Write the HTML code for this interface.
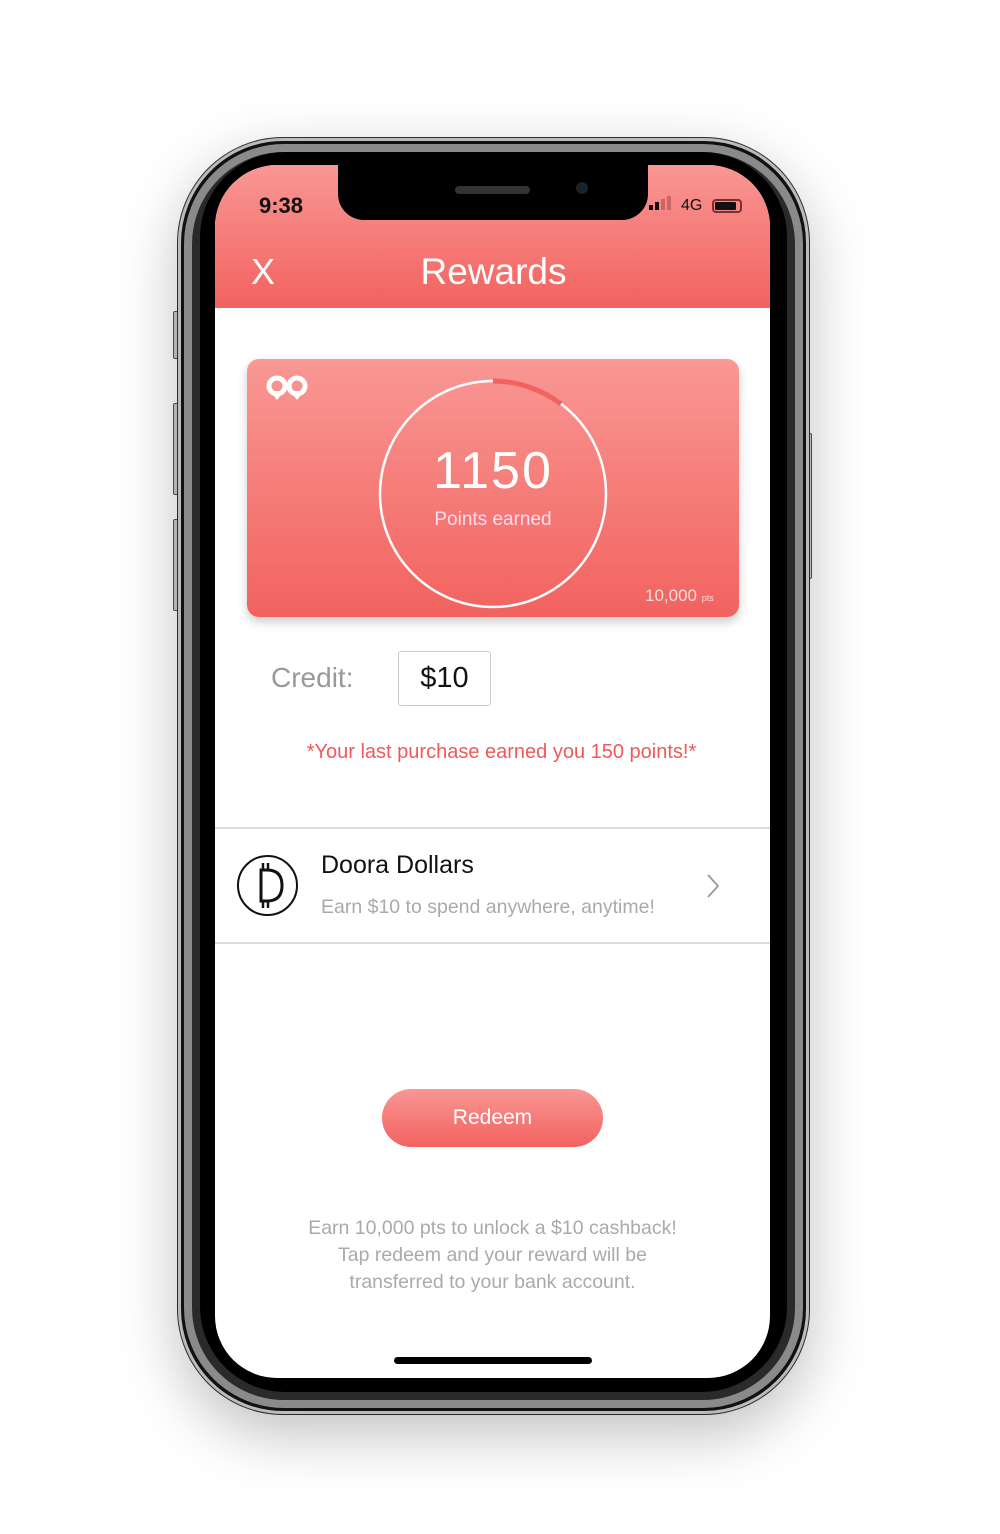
<!DOCTYPE html>
<html><head><meta charset="utf-8"><style>
*{margin:0;padding:0;box-sizing:border-box}
body{width:1000px;height:1534px;background:#fff;position:relative;overflow:hidden;font-family:"Liberation Sans",sans-serif}
.abs{position:absolute}
.phone{left:178px;top:138px;width:631px;height:1276px;border-radius:105px;background:#111;border:3px solid #bbb;box-shadow:0 20px 60px rgba(0,0,0,0.25),0 0 0 1px #333}
.rim{left:184px;top:144px;width:619px;height:1264px;border-radius:100px;background:#2a2a2a;border:8px solid #8a8a8a}
.bez{left:200px;top:152px;width:587px;height:1240px;border-radius:85px;background:#000}
.screen{left:215px;top:165px;width:555px;height:1213px;border-radius:62px;background:#fff;overflow:hidden}
.btn{background:#ccc;border:1px solid #555;border-radius:2px;width:6px}
</style></head><body>
<div class="abs btn" style="left:173px;top:311px;height:48px"></div>
<div class="abs btn" style="left:173px;top:403px;height:92px"></div>
<div class="abs btn" style="left:173px;top:519px;height:92px"></div>
<div class="abs btn" style="left:806px;top:433px;height:146px"></div>
<div class="abs phone"></div>
<div class="abs rim"></div>
<div class="abs bez"></div>
<div class="abs screen">
  <div class="abs" style="left:0;top:0;width:555px;height:143px;background:linear-gradient(#f99794,#f2625f)"></div>
  <div class="abs" style="left:123px;top:0;width:310px;height:55px;background:#000;border-radius:0 0 26px 26px"></div>
  <div class="abs" style="left:240px;top:21px;width:75px;height:8px;background:#333;border-radius:4px"></div>
  <div class="abs" style="left:361px;top:17px;width:12px;height:12px;background:#123;border-radius:50%;border:2px solid #222"></div>
  <div class="abs" style="left:44px;top:28px;font-size:22px;font-weight:bold;color:#111">9:38</div>
  <div class="abs" style="left:434px;top:40px;width:4px;height:5px;background:#111"></div>
  <div class="abs" style="left:440px;top:37px;width:4px;height:8px;background:#111"></div>
  <div class="abs" style="left:446px;top:34px;width:4px;height:11px;background:#c66"></div>
  <div class="abs" style="left:452px;top:31px;width:4px;height:14px;background:#c66"></div>
  <div class="abs" style="left:466px;top:32px;font-size:16px;color:#111">4G</div>
  <div class="abs" style="left:497px;top:34px;width:30px;height:14px;border:2px solid #7a3030;border-radius:4px;padding:1px"><div style="width:21px;height:8px;background:#111;border-radius:1px"></div></div>
  <div class="abs" style="left:36px;top:86px;font-size:36px;color:#fff">X</div>
  <div class="abs" style="left:0;top:86px;width:555px;text-align:center;font-size:37px;color:#fff;padding-left:2px">Rewards</div>

  <div class="abs" style="left:32px;top:194px;width:492px;height:258px;border-radius:12px;background:linear-gradient(#f99894,#f2625f);box-shadow:0 5px 10px rgba(0,0,0,0.2)">
    <svg class="abs" style="left:0;top:0" width="492" height="258">
      <g fill="none" stroke="#fff" stroke-width="5">
        <circle cx="30" cy="27" r="8"/><circle cx="50" cy="27" r="8"/>
      </g>
      <path d="M23 32 L30 41 L37 32 Z M43 32 L50 41 L57 32 Z" fill="#fff"/>
      <circle cx="246" cy="135" r="113" fill="none" stroke="#fff" stroke-width="2.5"/>
      <path d="M246 22 A113 113 0 0 1 314 45" fill="none" stroke="#f2625f" stroke-width="5"/>
    </svg>
    <div class="abs" style="left:0;top:82px;width:492px;text-align:center;font-size:52px;color:#fff;letter-spacing:2px">1150</div>
    <div class="abs" style="left:0;top:150px;width:492px;text-align:center;font-size:19px;color:#fde">Points earned</div>
    <div class="abs" style="left:398px;top:227px;font-size:17px;color:#fdd">10,000 <span style="font-size:9px">pts</span></div>
  </div>

  <div class="abs" style="left:56px;top:497px;font-size:28px;color:#999">Credit:</div>
  <div class="abs" style="left:183px;top:486px;width:93px;height:55px;border:1px solid #ccc;border-radius:3px;text-align:center;font-size:29px;line-height:53px;color:#111">$10</div>
  <div class="abs" style="left:0;top:576px;width:573px;text-align:center;font-size:20px;color:#f0595a">*Your last purchase earned you 150 points!*</div>

  <div class="abs" style="left:0;top:662px;width:555px;height:2px;background:#ddd"></div>
  <div class="abs" style="left:0;top:777px;width:555px;height:2px;background:#ddd"></div>
  <div class="abs" style="left:22px;top:690px;width:61px;height:61px;border:2.5px solid #111;border-radius:50%"></div>
  <svg class="abs" style="left:22px;top:690px" width="61" height="61">
    <path d="M24 15 L24 46 L30 46 Q45 46 45 30.5 Q45 15 30 15 Z" fill="none" stroke="#111" stroke-width="3"/>
    <path d="M26 8 V15 M31 8 V15 M26 46 V53 M31 46 V53" stroke="#111" stroke-width="2.5"/>
  </svg>
  <div class="abs" style="left:106px;top:686px;font-size:25px;color:#111">Doora Dollars</div>
  <div class="abs" style="left:106px;top:731px;font-size:19.5px;color:#aaa">Earn $10 to spend anywhere, anytime!</div>
  <svg class="abs" style="left:490px;top:708px" width="16" height="26"><path d="M3 2 L13 13 L3 24" fill="none" stroke="#999" stroke-width="1.8"/></svg>

  <div class="abs" style="left:167px;top:924px;width:221px;height:58px;border-radius:29px;background:linear-gradient(#f99794,#f2625f);text-align:center;line-height:58px;font-size:21px;color:#fff">Redeem</div>
  <div class="abs" style="left:0;top:1050px;width:555px;text-align:center;font-size:19.5px;line-height:27px;color:#aaa">Earn 10,000 pts to unlock a $10 cashback!<br>Tap redeem and your reward will be<br>transferred to your bank account.</div>
  <div class="abs" style="left:179px;top:1192px;width:198px;height:7px;background:#000;border-radius:4px"></div>
</div>
</body></html>
